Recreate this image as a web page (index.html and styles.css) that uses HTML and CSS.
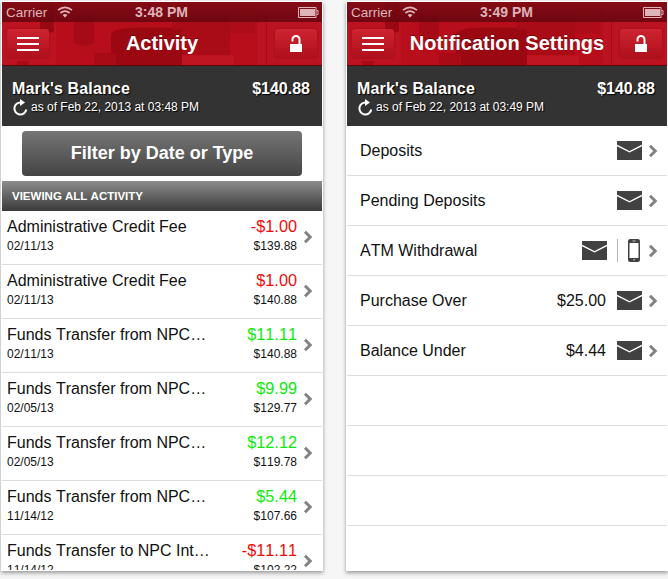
FILE: index.html
```
<!DOCTYPE html>
<html lang="en">
<head>
  <meta charset="UTF-8">
  <meta name="viewport" content="width=device-width, initial-scale=1.0">
  <title>Account Activity</title>
  <link rel="stylesheet" href="styles.css">
</head>
<body>
  <!-- shared icons -->
  <svg class="sprite" width="0" height="0">
    <symbol id="texture" viewBox="0 0 320 64" preserveAspectRatio="none">
      <rect width="320" height="64" fill="#b80e1b"/>
      <path d="M0 20h54v44h-54z" fill="#bd1320"/>
      <path d="M38 0h14v30q-7 3-14 0z" fill="#980913"/>
      <path d="M72 14h20v28q-10 5-20 0z" fill="#a50a16"/>
      <path d="M109 34q0-8 30-8h41v38h-88v-12h17z" fill="#9b0812"/>
      <path d="M92 52h22v12h-22z" fill="#a80a16"/>
      <path d="M170 14h58v40h-48v-26h-10z" fill="#a90b17"/>
      <path d="M228 20h25v12h-25z" fill="#ad0c18"/>
      <path d="M180 54h52v10h-52z" fill="#bf1421"/>
      <path d="M256 0h64v64h-64z" fill="#bb1321"/>
      <path d="M264 14h1v50h-1zM15 60h12v4h-12z" fill="#a60b17"/>
    </symbol>
    <symbol id="wifi" viewBox="0 0 16 12">
      <path d="M1 4.2q7-5.6 14 0M3.4 7q4.6-3.700 9.200 0" fill="none" stroke="currentColor" stroke-width="1.7"/>
      <path d="M5.6 9q2.4-1.8 4.8 0L8 11.4z" fill="currentColor"/>
    </symbol>
    <symbol id="battery" viewBox="0 0 21 11">
      <path d="M.5 .5h17.5v10h-17.5z" fill="none" stroke="currentColor"/>
      <path d="M2 2h15v7h-15z" fill="currentColor"/>
      <path d="M18.5 3.5h1.5v4h-1.5" fill="none" stroke="currentColor"/>
    </symbol>
    <symbol id="lock" viewBox="0 0 14 18">
      <path d="M1 9h12v8h-12z" fill="#fff"/>
      <path d="M3.5 6.500V4.500a3.500 3.500 0 0 1 7 0v5" fill="none" stroke="#fff" stroke-width="2"/>
    </symbol>
    <symbol id="refresh" viewBox="0 0 16 17">
      <path d="M8.5 3.5A6 6 0 1 0 13.800 10.500" fill="none" stroke="#fff" stroke-width="2"/>
      <path d="M7.5 0l5 3.400-5 3.600z" fill="#fff"/>
    </symbol>
    <symbol id="chevron" viewBox="0 0 10 14">
      <path d="M2 1.800L7.200 7l-5.200 5.200" fill="none" stroke="#828282" stroke-width="3"/>
    </symbol>
    <symbol id="mail" viewBox="0 0 25 19">
      <path d="M0 0h25v19h-25z" fill="#414141"/>
      <path d="M0 4.500l12.500 6.300 12.500-6.300" fill="none" stroke="#fff" stroke-width="1.400"/>
    </symbol>
    <symbol id="mobile" viewBox="0 0 12 23">
      <rect width="12" height="23" rx="2.200" fill="#414141"/>
      <path d="M1.500 4h9v15h-9z" fill="#fff"/>
      <path d="M4.500 2h3M5 20.800h2" stroke="#ccc" stroke-width="1"/>
    </symbol>
  </svg>

  <div class="phone">
    <div class="top">
      <svg class="texture"><use href="#texture"/></svg>
      <div class="status">
        <span class="carrier">Carrier</span>
        <svg class="wifi"><use href="#wifi"/></svg>
        <span class="time">3:48 PM</span>
        <svg class="battery"><use href="#battery"/></svg>
      </div>
      <div class="nav">
        <button class="nav-btn menu"><i></i><i></i><i></i></button>
        <h1>Activity</h1>
        <button class="nav-btn"><svg class="lock"><use href="#lock"/></svg></button>
      </div>
    </div>
    <div class="balance">
      <div>
        <h2>Mark's Balance</h2>
        <p><svg class="refresh"><use href="#refresh"/></svg>as of Feb 22, 2013 at 03:48 PM</p>
      </div>
      <strong>$140.88</strong>
    </div>
    <button class="filter">Filter by Date or Type</button>
    <h3 class="section">VIEWING ALL ACTIVITY</h3>
    <ul class="activity">
      <li>
        <div class="desc"><b>Administrative Credit Fee</b><small>02/11/13</small></div>
        <div class="sum"><b class="debit">-$1.00</b><small>$139.88</small></div>
        <svg class="chevron"><use href="#chevron"/></svg>
      </li>
      <li>
        <div class="desc"><b>Administrative Credit Fee</b><small>02/11/13</small></div>
        <div class="sum"><b class="debit">$1.00</b><small>$140.88</small></div>
        <svg class="chevron"><use href="#chevron"/></svg>
      </li>
      <li>
        <div class="desc"><b>Funds Transfer from NPC…</b><small>02/11/13</small></div>
        <div class="sum"><b class="credit">$11.11</b><small>$140.88</small></div>
        <svg class="chevron"><use href="#chevron"/></svg>
      </li>
      <li>
        <div class="desc"><b>Funds Transfer from NPC…</b><small>02/05/13</small></div>
        <div class="sum"><b class="credit">$9.99</b><small>$129.77</small></div>
        <svg class="chevron"><use href="#chevron"/></svg>
      </li>
      <li>
        <div class="desc"><b>Funds Transfer from NPC…</b><small>02/05/13</small></div>
        <div class="sum"><b class="credit">$12.12</b><small>$119.78</small></div>
        <svg class="chevron"><use href="#chevron"/></svg>
      </li>
      <li>
        <div class="desc"><b>Funds Transfer from NPC…</b><small>11/14/12</small></div>
        <div class="sum"><b class="credit">$5.44</b><small>$107.66</small></div>
        <svg class="chevron"><use href="#chevron"/></svg>
      </li>
      <li>
        <div class="desc"><b>Funds Transfer to NPC Int…</b><small>11/14/12</small></div>
        <div class="sum"><b class="debit">-$11.11</b><small>$102.22</small></div>
        <svg class="chevron"><use href="#chevron"/></svg>
      </li>
    </ul>
  </div>

  <div class="phone">
    <div class="top">
      <svg class="texture"><use href="#texture"/></svg>
      <div class="status">
        <span class="carrier">Carrier</span>
        <svg class="wifi"><use href="#wifi"/></svg>
        <span class="time">3:49 PM</span>
        <svg class="battery"><use href="#battery"/></svg>
      </div>
      <div class="nav">
        <button class="nav-btn menu"><i></i><i></i><i></i></button>
        <h1>Notification Settings</h1>
        <button class="nav-btn"><svg class="lock"><use href="#lock"/></svg></button>
      </div>
    </div>
    <div class="balance">
      <div>
        <h2>Mark's Balance</h2>
        <p><svg class="refresh"><use href="#refresh"/></svg>as of Feb 22, 2013 at 03:49 PM</p>
      </div>
      <strong>$140.88</strong>
    </div>
    <ul class="settings">
      <li><span>Deposits</span><svg class="mail"><use href="#mail"/></svg><svg class="chevron"><use href="#chevron"/></svg></li>
      <li><span>Pending Deposits</span><svg class="mail"><use href="#mail"/></svg><svg class="chevron"><use href="#chevron"/></svg></li>
      <li><span>ATM Withdrawal</span><svg class="mail"><use href="#mail"/></svg><i class="divider"></i><svg class="mobile"><use href="#mobile"/></svg><svg class="chevron"><use href="#chevron"/></svg></li>
      <li><span>Purchase Over</span><em>$25.00</em><svg class="mail"><use href="#mail"/></svg><svg class="chevron"><use href="#chevron"/></svg></li>
      <li><span>Balance Under</span><em>$4.44</em><svg class="mail"><use href="#mail"/></svg><svg class="chevron"><use href="#chevron"/></svg></li>
      <li></li>
      <li></li>
      <li></li>
      <li></li>
    </ul>
  </div>
</body>
</html>
```
FILE: styles.css
```
* {
  box-sizing: border-box;
}

body {
  margin: 0;
  padding: 2px;
  display: flex;
  gap: 25px;
  height: 579px;
  overflow: hidden;
  background: #f6f6f6;
  font-family: "Liberation Sans", Arial, sans-serif;
  font-kerning: none;
  color: #111;
}

.sprite {
  position: absolute;
}

h1, h2, h3, p, ul {
  margin: 0;
  padding: 0;
}

ul {
  list-style: none;
}

button {
  border: 0;
  padding: 0;
  font-family: inherit;
  color: #fff;
}

.phone {
  flex: none;
  width: 320px;
  height: 568px;
  overflow: hidden;
  background: #fff;
  box-shadow: 0 0 0 1px #fff, 0 2px 4px 1px #999;
}

/* status bar + nav bar */
.top {
  position: relative;
  height: 64px;
  border-bottom: 1px solid #5d060d;
}

.texture {
  position: absolute;
  top: 0;
  left: 0;
  width: 320px;
  height: 63px;
}

.status {
  position: relative;
  display: flex;
  align-items: center;
  height: 20px;
  padding: 0 3px 0 4px;
  background: linear-gradient(rgba(120, 10, 20, .8), rgba(100, 5, 15, .85));
  color: #dfb4b8;
  font-size: 13.5px;
}

.carrier {
  width: 43px;
}

.wifi {
  width: 16px;
  height: 12px;
  margin-left: 8px;
}

.time {
  flex: 1;
  padding-left: 62px;
  font-size: 14px;
  font-weight: bold;
}

.battery {
  width: 21px;
  height: 11px;
}

.nav {
  position: relative;
  display: flex;
  align-items: center;
  justify-content: space-between;
  height: 43px;
  padding: 0 5px;
}

.nav h1 {
  font-size: 20px;
  color: #fff;
  text-shadow: 0 -1px 0 rgba(80, 0, 0, .6);
}

.nav-btn {
  display: flex;
  align-items: center;
  justify-content: center;
  width: 42px;
  height: 29px;
  border-radius: 3px;
  background: linear-gradient(#cd2430, #ae101b);
  box-shadow: 0 0 2px #8a0811;
}

.menu {
  flex-direction: column;
  gap: 4px;
}

.menu i {
  width: 22px;
  height: 2px;
  background: #fff;
}

.lock {
  width: 14px;
  height: 18px;
}

.balance {
  display: flex;
  justify-content: space-between;
  height: 60px;
  padding: 13px 12px 0 10px;
  background: #333;
  color: #fff;
  text-shadow: 1px 1px 1px #000;
}

.balance h2 {
  font-size: 16px;
  line-height: 19px;
  letter-spacing: .15px;
}

.balance p {
  display: flex;
  align-items: center;
  height: 18px;
  font-size: 12px;
}

.refresh {
  width: 17px;
  height: 17px;
  margin-right: 2px;
}

.balance strong {
  font-size: 16px;
  line-height: 20px;
}

/* activity list */
.filter {
  display: block;
  width: 280px;
  height: 45px;
  margin: 5px auto;
  border-radius: 4px;
  background: linear-gradient(#757575, #444);
  font-size: 18px;
  font-weight: bold;
}

.section {
  height: 30px;
  padding-left: 10px;
  background: linear-gradient(#8c8c8c, #3a3a3a);
  color: #fff;
  font-size: 11.5px;
  line-height: 30px;
}

.activity li {
  display: flex;
  height: 54px;
  padding: 6px 9px 0 5px;
  border-bottom: 1px solid #dcdcdc;
}

.activity b {
  display: block;
  font-size: 16px;
  font-weight: normal;
  line-height: 19px;
}

.activity small {
  display: block;
  font-size: 12px;
  line-height: 20px;
}

.desc {
  flex: 1;
}

.sum {
  text-align: right;
}

.sum b {
  font-size: 16.3px;
}

.activity .debit {
  color: #f00a0a;
}

.activity .credit {
  color: #0cec0c;
}

.chevron {
  width: 10px;
  height: 14px;
}

.activity .chevron {
  margin: 13px 0 0 6px;
}

/* notification settings */
.settings li {
  display: flex;
  align-items: center;
  height: 50px;
  padding: 0 9px 0 13px;
  border-bottom: 1px solid #dcdcdc;
  font-size: 16px;
}

.settings span {
  flex: 1;
}

.settings em {
  margin-right: 11px;
  font-style: normal;
}

.mail {
  width: 25px;
  height: 19px;
}

.divider {
  width: 1px;
  height: 23px;
  margin: 0 10px;
  background: #b5b5b5;
}

.mobile {
  width: 12px;
  height: 23px;
  margin-right: 2px;
}

.settings .chevron {
  margin-left: 6px;
}
```
